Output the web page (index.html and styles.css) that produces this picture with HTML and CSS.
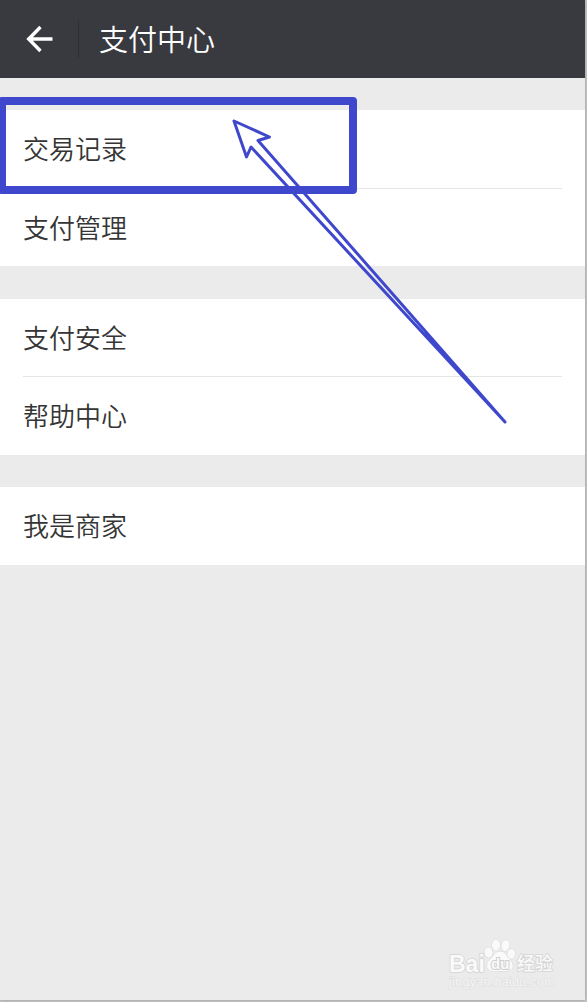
FILE: index.html
```html
<!DOCTYPE html>
<html lang="zh-CN">
<head>
    <meta charset="UTF-8">
    <meta name="viewport" content="width=device-width, initial-scale=1.0">
    <title>支付中心</title>
    <link rel="stylesheet" href="styles.css">
</head>
<body>
    <div class="screen">
        <header class="navbar">
            <button class="back" aria-label="返回">
                <svg width="28" height="28" viewBox="0 0 28 28">
                    <path d="M26.500 14H3M14.500 2L2.700 14L14.500 26" />
                </svg>
            </button>
            <h1>支付中心</h1>
        </header>

        <main class="menu">
            <div class="group">
                <a class="row">交易记录</a>
                <a class="row">支付管理</a>
            </div>
            <div class="group">
                <a class="row">支付安全</a>
                <a class="row">帮助中心</a>
            </div>
            <div class="group">
                <a class="row">我是商家</a>
            </div>
        </main>

        <!-- highlight box and arrow -->
        <svg class="marks" width="585" height="440" viewBox="0 0 585 440">
            <rect x="2" y="101" width="351" height="89" />
            <path d="M234 121L269.500 137L258 140.500L505 422L251 147L246.500 157Z" />
        </svg>

        <div class="watermark">
            <div class="brand">
                <span class="bai">Bai</span>
                <span class="paw">
                    <svg width="32" height="34" viewBox="0 0 32 34">
                        <ellipse cx="4.500" cy="14.500" rx="3.900" ry="5.200" transform="rotate(-12 4.500 14.500)" />
                        <ellipse cx="12" cy="7" rx="4" ry="5.700" />
                        <ellipse cx="21.500" cy="7.500" rx="4" ry="5.500" transform="rotate(12 21.500 7.500)" />
                        <ellipse cx="27.300" cy="16" rx="3.900" ry="5" transform="rotate(15 27.300 16)" />
                        <path d="M16 13.500C11 13.500 10 18 7 20.500C3 24 2 27 4 30.500C6 34 11 33 16 33C21 33 26 34 28 30.500C30 27 28 24 25 20.500C22 17 21 13.500 16 13.500Z" />
                    </svg>
                    <span class="du">du</span>
                </span>
                <span class="jingyan">经验</span>
            </div>
            <div class="url">jingyan.baidu.com</div>
        </div>
    </div>
</body>
</html>
```

FILE: styles.css
```css
* {
    box-sizing: border-box;
}

body {
    margin: 0;
    height: 1002px;
    overflow: hidden;
    background-color: #c6c6c6;
    font-family: "Noto Sans CJK SC", sans-serif;
}

.screen {
    position: relative;
    width: 585px;
    height: 1000px;
    background-color: #ebebeb;
    box-shadow: 0 0 3px #999;
}

.navbar {
    display: flex;
    align-items: center;
    height: 78px;
    background-color: #393a3f;
    color: #fff;
}

.back {
    display: flex;
    align-items: center;
    width: 79px;
    height: 38px;
    padding: 0 0 0 26px;
    border: none;
    border-right: 1px solid #2e2f33;
    background: none;
}

.back path {
    fill: none;
    stroke: #fff;
    stroke-width: 3.4;
}

.navbar h1 {
    margin: 0 0 3px 20px;
    font-size: 29px;
    font-weight: 350;
    line-height: 40px;
}

.menu {
    display: flex;
    flex-direction: column;
    gap: 32.5px;
    padding-top: 32.4px;
}

.group {
    padding: 0 23px;
    background-color: #fff;
}

.row {
    display: flex;
    align-items: center;
    height: 77.5px;
    padding-bottom: 3px;
    color: #353535;
    font-size: 26px;
    font-weight: 350;
}

.row + .row {
    height: 78.5px;
    border-top: 1px solid #e5e5e5;
}

.marks {
    position: absolute;
    top: 0;
    left: 0;
}

.marks rect,
.marks path {
    fill: none;
    stroke: #3f48cc;
    stroke-width: 8;
    stroke-linejoin: round;
}

.marks path {
    stroke-width: 3;
}

.watermark {
    position: absolute;
    left: 449px;
    top: 938px;
    width: 106px;
    color: #fafafa;
    font-family: "Liberation Sans", "Noto Sans CJK SC", sans-serif;
    -webkit-text-stroke: 1.6px #d4d4d4;
    paint-order: stroke fill;
}

.brand {
    display: flex;
    align-items: flex-end;
    height: 36px;
}

.bai {
    width: 35px;
    font-size: 23px;
    font-weight: 700;
    line-height: 20px;
}

.paw {
    position: relative;
    width: 32px;
    height: 36px;
}

.paw svg {
    display: block;
    fill: #fafafa;
    stroke: #d4d4d4;
    stroke-width: 0.9;
}

.du {
    position: absolute;
    left: 7px;
    top: 18px;
    color: #fafafa;
    font-size: 15px;
    font-weight: 700;
    line-height: 16px;
    -webkit-text-stroke: 2px #cfcfcf;
}

.jingyan {
    margin-left: 1px;
    font-size: 18px;
    font-weight: 500;
    line-height: 19px;
    white-space: nowrap;
}

.url {
    margin-top: 2px;
    font-size: 12.5px;
    line-height: 13px;
    letter-spacing: 0.3px;
    color: #f6f6f6;
    white-space: nowrap;
    -webkit-text-stroke: 1px #dcdcdc;
}
```
